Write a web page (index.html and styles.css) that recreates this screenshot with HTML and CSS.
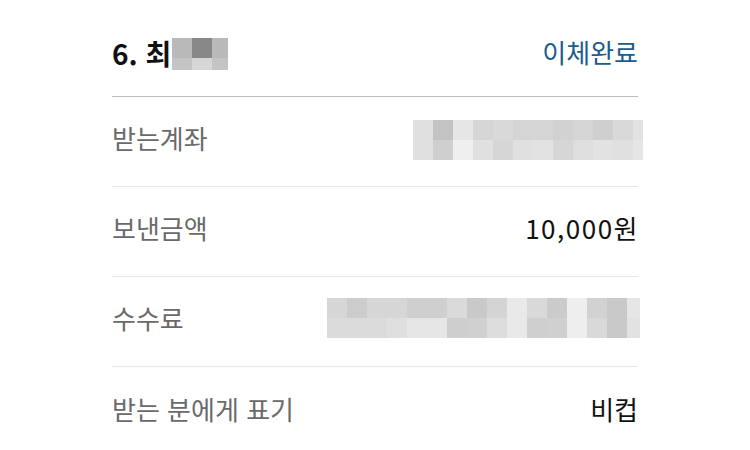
FILE: index.html
```html
<!DOCTYPE html>
<html lang="ko">
<head>
  <meta charset="UTF-8">
  <title>이체 내역</title>
  <meta name="viewport" content="width=device-width, initial-scale=1">
  <link rel="stylesheet" href="styles.css">
</head>
<body>
  <main class="transfer">
    <header class="transfer-head">
      <div class="recipient">
        <span>6. 최</span>
        <div class="mosaic mosaic-name">
          <i style="background:#b9b9b9"></i><i style="background:#888888"></i><i style="background:#b9b9b9"></i>
          <i style="background:#c4c4c4"></i><i style="background:#d6d6d6"></i><i style="background:#c4c4c4"></i>
        </div>
      </div>
      <div class="status">이체완료</div>
    </header>

    <div class="row">
      <div class="label">받는계좌</div>
      <div class="mosaic mosaic-account">
        <i style="background:#e0e0e0"></i><i style="background:#c3c3c3"></i><i style="background:#e6e6e6"></i><i style="background:#d6d6d6"></i><i style="background:#d9d9d9"></i><i style="background:#d5d5d5"></i><i style="background:#d5d5d5"></i><i style="background:#d2d2d2"></i><i style="background:#d5d5d5"></i><i style="background:#cfcfcf"></i><i style="background:#d9d9d9"></i><i style="background:#e2e2e2"></i>
        <i style="background:#e0e0e0"></i><i style="background:#cfcfcf"></i><i style="background:#efefef"></i><i style="background:#e0e0e0"></i><i style="background:#d6d6d6"></i><i style="background:#e0e0e0"></i><i style="background:#e2e2e2"></i><i style="background:#d6d6d6"></i><i style="background:#dedede"></i><i style="background:#e2e2e2"></i><i style="background:#e0e0e0"></i><i style="background:#e6e6e6"></i>
      </div>
    </div>

    <div class="row">
      <div class="label">보낸금액</div>
      <div class="value amount">10,000원</div>
    </div>

    <div class="row">
      <div class="label">수수료</div>
      <div class="mosaic mosaic-fee">
        <i style="background:#d6d6d6"></i><i style="background:#cccccc"></i><i style="background:#d6d6d6"></i><i style="background:#d6d6d6"></i><i style="background:#cfcfcf"></i><i style="background:#cfcfcf"></i><i style="background:#dadada"></i><i style="background:#c9c9c9"></i><i style="background:#d4d4d4"></i><i style="background:#e9e9e9"></i><i style="background:#d9d9d9"></i><i style="background:#cbcbcb"></i><i style="background:#eeeeee"></i><i style="background:#d2d2d2"></i><i style="background:#c9c9c9"></i><i style="background:#e6e6e6"></i>
        <i style="background:#dbdbdb"></i><i style="background:#dbdbdb"></i><i style="background:#dbdbdb"></i><i style="background:#dfdfdf"></i><i style="background:#e6e6e6"></i><i style="background:#e6e6e6"></i><i style="background:#cecece"></i><i style="background:#d0d0d0"></i><i style="background:#dddddd"></i><i style="background:#e9e9e9"></i><i style="background:#cfcfcf"></i><i style="background:#d0d0d0"></i><i style="background:#eeeeee"></i><i style="background:#d9d9d9"></i><i style="background:#c9c9c9"></i><i style="background:#e2e2e2"></i>
      </div>
    </div>

    <div class="row last">
      <div class="label">받는 분에게 표기</div>
      <div class="value">비컵</div>
    </div>
  </main>
</body>
</html>
```

FILE: styles.css
```css
body {
  font-family: "Noto Sans CJK KR", "Noto Sans", sans-serif;
  background: #fff;
  margin: 0;
  padding: 0;
  color: #111;
}
.transfer {
  padding: 0 112px;
}
.transfer-head {
  height: 97px;
  display: flex;
  align-items: center;
  justify-content: space-between;
  border-bottom: 1px solid #bdbdbd;
  padding-top: 9px;
  box-sizing: border-box;
}
.recipient {
  display: flex;
  align-items: center;
  font-size: 28px;
  font-weight: bold;
  color: #111;
}
.mosaic-name {
  margin-top: 2px;
}
.status {
  font-size: 26px;
  color: #1b5c8f;
  margin-top: -3px;
}
.row {
  height: 90px;
  box-sizing: border-box;
  display: flex;
  align-items: center;
  justify-content: space-between;
  border-bottom: 1px solid #e8e8e8;
  padding-bottom: 8px;
}
.row.last {
  border-bottom: none;
}
.label {
  font-size: 26px;
  color: #6a6a6a;
}
.value {
  font-size: 26px;
  color: #111;
}
.amount {
  letter-spacing: 1.5px;
  margin-right: -1px;
}
.mosaic {
  display: grid;
}
.mosaic i {
  display: block;
}
.mosaic-name {
  grid-template-columns: 20px 20px 16px;
  grid-template-rows: 20px 12px;
  margin-left: 1px;
}
.mosaic-account {
  grid-template-columns: repeat(11, 20px) 10px;
  grid-template-rows: 20px 20px;
  margin-right: -5px;
  margin-top: 5px;
}
.mosaic-fee {
  grid-template-columns: repeat(15, 20px) 13px;
  grid-template-rows: 20px 20px;
  margin-right: -2px;
}
```
